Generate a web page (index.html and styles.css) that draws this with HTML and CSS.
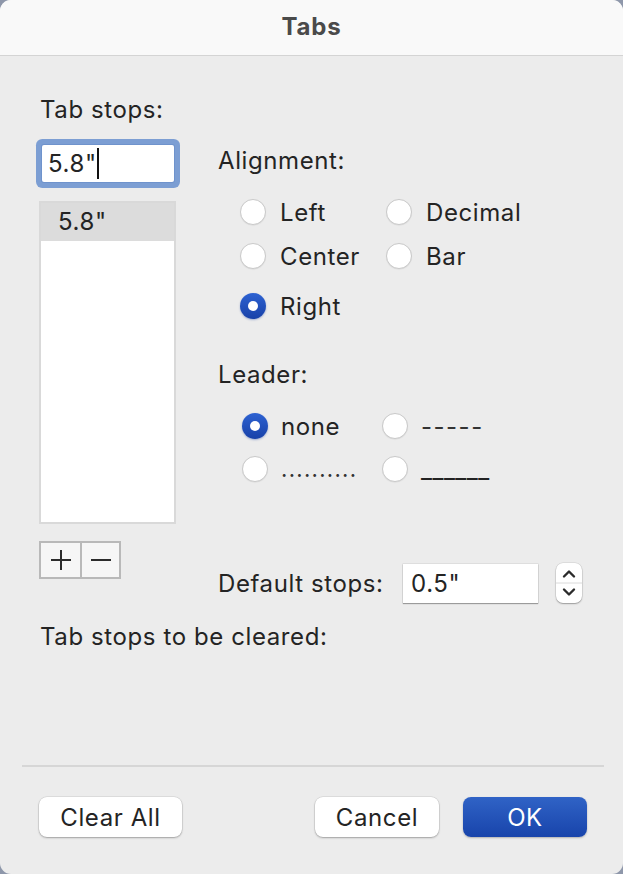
FILE: index.html
```html
<!DOCTYPE html>
<html lang="en">
<head>
<meta charset="utf-8">
<title>Tabs</title>
<link rel="stylesheet" href="styles.css">
</head>
<body>
<div class="window">
  <header class="titlebar">Tabs</header>
  <div class="content">
    <div class="main">
      <div class="left">
        <div class="label">Tab stops:</div>
        <div class="field focused"><span>5.8"</span><span class="caret"></span></div>
        <div class="list"><div class="row selected">5.8"</div></div>
        <div class="pm">
          <div class="pm-btn"><svg width="22" height="22" viewBox="0 0 22 22"><path d="M11 1v20M1 11h20" stroke="#2b2b2b" stroke-width="2" fill="none"/></svg></div>
          <div class="pm-btn"><svg width="22" height="22" viewBox="0 0 22 22"><path d="M1 11h20" stroke="#2b2b2b" stroke-width="2" fill="none"/></svg></div>
        </div>
      </div>
      <div class="right">
        <div class="label align-label">Alignment:</div>
        <div class="radios align">
          <div class="opt"><span class="radio"></span><span>Left</span></div>
          <div class="opt"><span class="radio"></span><span>Decimal</span></div>
          <div class="opt"><span class="radio"></span><span>Center</span></div>
          <div class="opt"><span class="radio"></span><span>Bar</span></div>
          <div class="opt third"><span class="radio checked"></span><span>Right</span></div>
        </div>
        <div class="label leader-label">Leader:</div>
        <div class="radios leader">
          <div class="opt"><span class="radio checked"></span><span>none</span></div>
          <div class="opt"><span class="radio"></span><span class="dash">-----</span></div>
          <div class="opt"><span class="radio"></span><span class="dots">..........</span></div>
          <div class="opt"><span class="radio"></span><span class="under">______</span></div>
        </div>
        <div class="default-row">
          <span class="default-label">Default stops:</span>
          <div class="field plain">0.5"</div>
          <div class="stepper">
            <svg width="26" height="40" viewBox="0 0 26 40"><path d="M8 13.5l5-5 5 5M8 26.5l5 5 5-5" stroke="#2b2b2b" stroke-width="2.4" fill="none" stroke-linecap="round" stroke-linejoin="round"/><path d="M0 20h26" stroke="#dadada" stroke-width="1"/></svg>
          </div>
        </div>
      </div>
    </div>
    <div class="label cleared">Tab stops to be cleared:</div>
  </div>
  <div class="sep"></div>
  <footer class="footer">
    <div class="btn clear">Clear All</div>
    <div class="btn-group">
      <div class="btn">Cancel</div>
      <div class="btn primary">OK</div>
    </div>
  </footer>
</div>
</body>
</html>
```
FILE: styles.css
```css
* { box-sizing: border-box; }
html, body { margin: 0; padding: 0; }
body {
  background: #8e97aa;
  font-family: "Inter", "Liberation Sans", sans-serif;
  color: #242424;
  font-size: 24px;
  letter-spacing: 0.6px;
}
.window {
  width: 623px;
  height: 874px;
  background: #ececec;
  border-radius: 11px;
  overflow: hidden;
  display: flex;
  flex-direction: column;
}
.titlebar {
  height: 56px;
  background: #f9f9f9;
  border-bottom: 1px solid #d4d4d4;
  display: flex;
  align-items: center;
  justify-content: center;
  font-weight: 700;
  font-size: 24px;
  letter-spacing: 0.8px;
  color: #4a4a4a;
  padding-bottom: 3px;
}
.content {
  flex: 1;
  padding: 40px 0 0 40px;
}
.main { display: flex; }
.label { line-height: 28px; height: 28px; white-space: nowrap; }
.left { width: 178px; flex: none; display: flex; flex-direction: column; align-items: flex-start; }
.field {
  background: #fff;
  display: flex;
  align-items: center;
}
.field.focused {
  margin: 21px 0 0 2px;
  width: 132px;
  height: 37px;
  padding-left: 6px;
  border-radius: 2px;
  box-shadow: 0 0 0 1px #6f93cc, 0 0 0 6px #7c9ed3;
}
.caret { width: 2px; height: 31px; background: #111; margin-left: 0; }
.list {
  margin: 19px 0 0 -1px;
  width: 137px;
  height: 323px;
  background: #fff;
  border: 2px solid #d9d9d9;
}
.row { height: 38px; line-height: 38px; padding-left: 17px; }
.row.selected { background: #dcdcdc; }
.pm {
  margin: 17px 0 0 -1px;
  display: flex;
  border: 2px solid #b9b9b9;
  background: #f6f6f6;
}
.pm-btn {
  width: 39px;
  height: 34px;
  display: flex;
  align-items: center;
  justify-content: center;
}
.pm-btn + .pm-btn { border-left: 2px solid #b9b9b9; }
.right { display: flex; flex-direction: column; }
.align-label { margin-top: 51px; }
.radios { display: grid; }
.radios .opt { display: flex; align-items: center; height: 30px; gap: 14px; white-space: nowrap; }
.radios.align { margin: 22px 0 0 22px; grid-template-columns: 146px auto; row-gap: 14px; }
.radios.align .third { margin-top: 6px; }
.leader-label { margin-top: 40px; }
.radios.leader { margin: 22px 0 0 24px; grid-template-columns: 140px auto; row-gap: 13px; }
.radios.leader .opt { gap: 13px; }
.radio {
  width: 26px;
  height: 26px;
  border-radius: 50%;
  background: #fff;
  border: 1px solid #c9c9c9;
  box-shadow: 0 0.5px 1px rgba(0,0,0,0.08);
  flex: none;
  display: flex;
  align-items: center;
  justify-content: center;
}
.radio.checked {
  border: none;
  background: linear-gradient(#2d62d2, #1841a8);
  box-shadow: 0 1px 2px rgba(20,60,160,0.35);
}
.radio.checked::after {
  content: "";
  width: 10px;
  height: 10px;
  border-radius: 50%;
  background: #fff;
}
.dash { color: #333; letter-spacing: 1.5px; }
.dots { color: #333; letter-spacing: 1.3px; font-size: 22px; }
.under { color: #222; letter-spacing: 0.5px; }
.default-row { margin-top: 79px; display: flex; align-items: center; height: 40px; }
.default-label { width: 185px; flex: none; white-space: nowrap; }
.field.plain {
  width: 135px;
  height: 39px;
  padding-left: 8px;
  box-shadow: 0 1px 1px rgba(0,0,0,0.3), 0 0 0 0.5px rgba(0,0,0,0.12);
}
.stepper {
  margin-left: 18px;
  width: 26px;
  height: 40px;
  background: #fff;
  border-radius: 7px;
  box-shadow: 0 1px 1.5px rgba(0,0,0,0.3), 0 0 0 0.5px rgba(0,0,0,0.12);
  overflow: hidden;
}
.stepper svg { display: block; }
.cleared { margin-top: 20px; }
.sep { height: 2px; background: #d6d6d6; margin: 0 19px 0 22px; }
.footer {
  height: 107px;
  padding: 30px 36px 0 39px;
  display: flex;
  justify-content: space-between;
  align-items: flex-start;
}
.btn-group { display: flex; gap: 24px; }
.btn {
  height: 40px;
  width: 124px;
  border-radius: 8px;
  background: #fff;
  display: flex;
  align-items: center;
  justify-content: center;
  box-shadow: 0 1px 2px rgba(0,0,0,0.28), 0 0 0 0.5px rgba(0,0,0,0.12);
}
.btn.clear { width: 143px; }
.btn.primary {
  background: linear-gradient(#3063c6, #1844ab);
  color: #fff;
  box-shadow: 0 1px 2px rgba(0,0,0,0.25);
}
```
